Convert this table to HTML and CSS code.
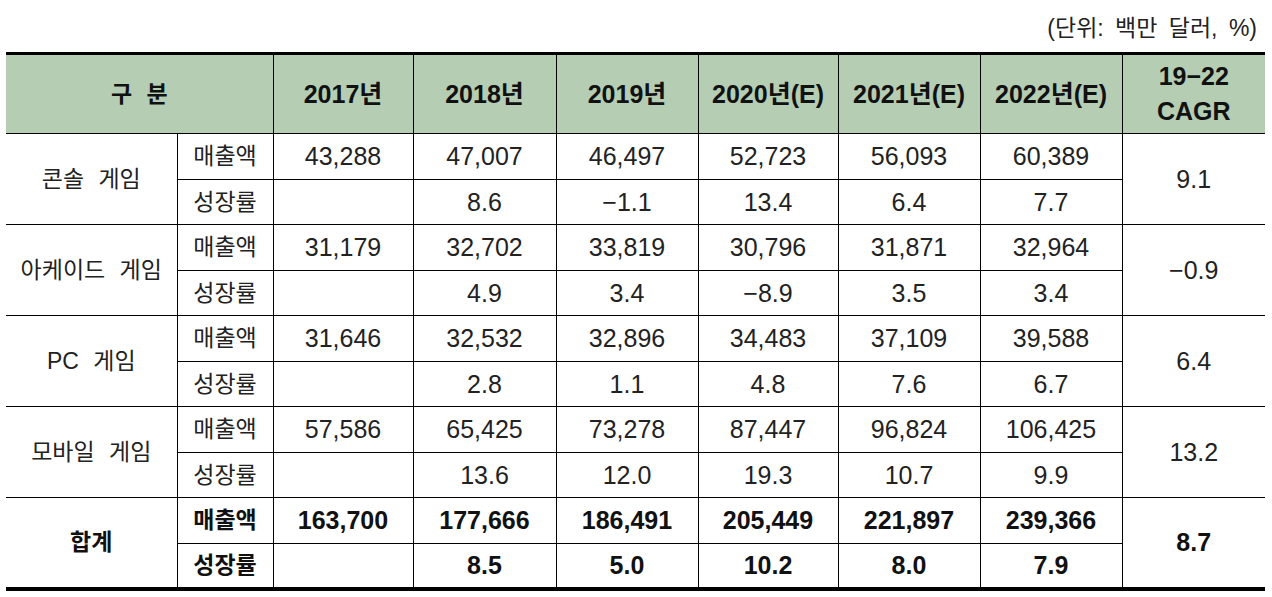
FILE: index.html
```html
<!DOCTYPE html>
<html lang="ko">
<head>
<meta charset="utf-8">
<title>게임 시장 규모</title>
<link rel="stylesheet" href="styles.css">
</head>
<body>
<div class="page">
  <div class="unit">(단위: 백만 달러, %)</div>
  <table class="data">
    <colgroup>
      <col class="c-cat"><col class="c-lbl"><col class="c-17"><col class="c-18"><col class="c-19"><col class="c-20"><col class="c-21"><col class="c-22"><col class="c-cagr">
    </colgroup>
    <thead>
      <tr class="head">
        <th colspan="2" class="first wide">구 분</th>
        <th>2017년</th>
        <th>2018년</th>
        <th>2019년</th>
        <th>2020년(E)</th>
        <th>2021년(E)</th>
        <th>2022년(E)</th>
        <th class="end two">19−22<br>CAGR</th>
      </tr>
    </thead>
    <tbody>
      <tr class="ra">
        <td rowspan="2" class="cat wide">콘솔 게임</td>
        <td class="lbl">매출액</td>
        <td>43,288</td><td>47,007</td><td>46,497</td><td>52,723</td><td>56,093</td><td>60,389</td>
        <td rowspan="2" class="end">9.1</td>
      </tr>
      <tr class="rb">
        <td class="lbl">성장률</td>
        <td></td><td>8.6</td><td>−1.1</td><td>13.4</td><td>6.4</td><td>7.7</td>
      </tr>
      <tr class="ra">
        <td rowspan="2" class="cat wide">아케이드 게임</td>
        <td class="lbl">매출액</td>
        <td>31,179</td><td>32,702</td><td>33,819</td><td>30,796</td><td>31,871</td><td>32,964</td>
        <td rowspan="2" class="end">−0.9</td>
      </tr>
      <tr class="rb">
        <td class="lbl">성장률</td>
        <td></td><td>4.9</td><td>3.4</td><td>−8.9</td><td>3.5</td><td>3.4</td>
      </tr>
      <tr class="ra">
        <td rowspan="2" class="cat wide">PC 게임</td>
        <td class="lbl">매출액</td>
        <td>31,646</td><td>32,532</td><td>32,896</td><td>34,483</td><td>37,109</td><td>39,588</td>
        <td rowspan="2" class="end">6.4</td>
      </tr>
      <tr class="rb">
        <td class="lbl">성장률</td>
        <td></td><td>2.8</td><td>1.1</td><td>4.8</td><td>7.6</td><td>6.7</td>
      </tr>
      <tr class="ra">
        <td rowspan="2" class="cat wide">모바일 게임</td>
        <td class="lbl">매출액</td>
        <td>57,586</td><td>65,425</td><td>73,278</td><td>87,447</td><td>96,824</td><td>106,425</td>
        <td rowspan="2" class="end">13.2</td>
      </tr>
      <tr class="rb">
        <td class="lbl">성장률</td>
        <td></td><td>13.6</td><td>12.0</td><td>19.3</td><td>10.7</td><td>9.9</td>
      </tr>
      <tr class="ra total">
        <td rowspan="2" class="cat bottom">합계</td>
        <td class="lbl">매출액</td>
        <td>163,700</td><td>177,666</td><td>186,491</td><td>205,449</td><td>221,897</td><td>239,366</td>
        <td rowspan="2" class="end bottom">8.7</td>
      </tr>
      <tr class="rb total last">
        <td class="lbl">성장률</td>
        <td></td><td>8.5</td><td>5.0</td><td>10.2</td><td>8.0</td><td>7.9</td>
      </tr>
    </tbody>
  </table>
</div>
</body>
</html>
```

FILE: styles.css
```css
html, body {
  margin: 0;
  padding: 0;
  background: #ffffff;
}

body {
  font-family: "Liberation Sans", "Noto Sans CJK KR", sans-serif;
  color: #222222;
}

.page {
  width: 1259px;
  margin-left: 6px;
}

.unit {
  height: 52px;
  display: flex;
  align-items: center;
  justify-content: flex-end;
  padding-right: 8px;
  box-sizing: border-box;
  font-size: 23px;
  word-spacing: 5px;
  color: #222222;
}

.data {
  width: 1259px;
  border-collapse: collapse;
  table-layout: fixed;
}

.c-cat { width: 171px; }
.c-lbl { width: 96px; }
.c-17 { width: 140px; }
.c-18 { width: 143px; }
.c-19 { width: 142px; }
.c-20 { width: 140px; }
.c-21 { width: 142px; }
.c-22 { width: 142px; }
.c-cagr { width: 143px; }

.data th,
.data td {
  border: 1px solid #000000;
  padding: 0;
  text-align: center;
  vertical-align: middle;
  font-size: 25px;
  line-height: 30px;
  white-space: nowrap;
}

.data th {
  background: #b4cdb3;
  font-weight: 700;
  color: #111111;
  border-top: 3px solid #000000;
}

.head {
  height: 80px;
}

.ra,
.rb {
  height: 45.5px;
}

.data .first,
.data .cat {
  border-left: none;
}

.data .end {
  border-right: none;
}

.data .two {
  line-height: 35px;
}

.data .lbl,
.data .cat,
.data .first {
  font-size: 23px;
}

.data .wide {
  word-spacing: 8px;
}

.total td {
  font-weight: 700;
  color: #111111;
}

.last td,
.data .bottom {
  border-bottom: 4px solid #000000;
}
```
